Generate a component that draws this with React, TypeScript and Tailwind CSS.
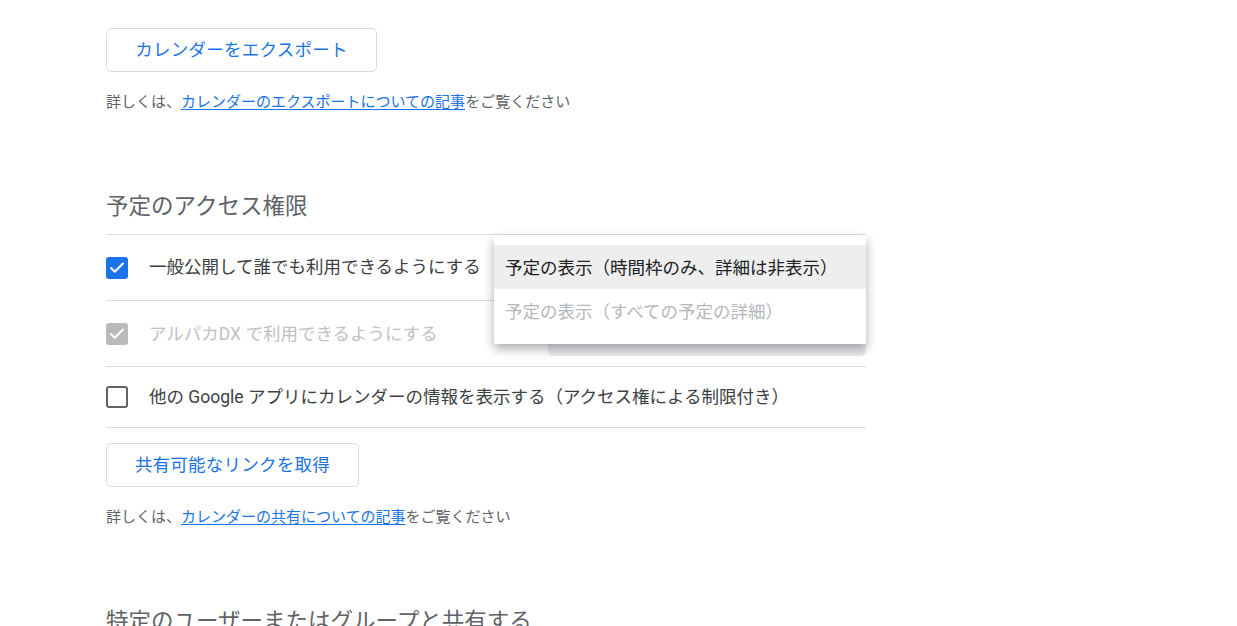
import { Check } from 'lucide-react'

const Box = ({ state }: { state: 'on' | 'off' | 'disabled' }) => {
  if (state === 'off') {
    return <span className="block w-[22px] h-[22px] rounded-[3px] border-[2.5px] border-[#5f6368] shrink-0" />
  }
  return (
    <span
      className={
        'flex items-center justify-center w-[22px] h-[22px] rounded-[3px] shrink-0 ' +
        (state === 'on' ? 'bg-[#1a73e8]' : 'bg-[#bababa]')
      }
    >
      <Check className="w-[18px] h-[18px] text-white" strokeWidth={2.75} />
    </span>
  )
}

export default function App() {
  return (
    <div className="h-[626px] overflow-hidden bg-white font-['Roboto','Noto_Sans_CJK_JP',sans-serif]">
      <div className="ml-[106px] w-[760px] pt-[28px]">
        <button className="h-[44px] w-[271px] rounded-[5px] border border-[#dadce0] bg-white text-[17.5px] tracking-[0.25px] text-[#1a73e8]">
          カレンダーをエクスポート
        </button>
        <p className="mt-[20px] text-[15px] leading-[20px] text-[#5f6368]">
          詳しくは、
          <a className="text-[#1a73e8] underline underline-offset-2">カレンダーのエクスポートについての記事</a>
          をご覧ください
        </p>

        <h2 className="mt-[79px] text-[22.5px] leading-[30px] text-[#5f6368]">予定のアクセス権限</h2>

        <div className="mt-[13px] border-t border-[#dadce0]">
          {/* row 1 */}
          <div className="relative flex h-[66px] items-center gap-[21px] border-b border-[#dadce0]">
            <Box state="on" />
            <span className="text-[17.5px] text-[#3c4043]">一般公開して誰でも利用できるようにする</span>
            <div className="absolute left-[388px] top-0 z-10 w-[372px] bg-white pt-[10px] pb-[11px] shadow-[0_5px_10px_rgba(0,0,0,0.32)]">
              <div className="flex h-[44px] items-center bg-[#eeeeee] px-[11px] pt-[2px] text-[17.5px] text-[#202124]">
                予定の表示（時間枠のみ、詳細は非表示）
              </div>
              <div className="flex h-[44px] items-center px-[11px] pt-[2px] text-[17.5px] text-[#b4b7bb]">
                予定の表示（すべての予定の詳細）
              </div>
            </div>
          </div>
          {/* row 2 */}
          <div className="flex h-[66px] items-center gap-[21px] border-b border-[#dadce0]">
            <Box state="disabled" />
            <span className="pt-[2px] text-[17.5px] text-[#bdc1c6]">アルパカDX で利用できるようにする</span>
            <div className="ml-auto h-[44px] w-[318px] rounded-[5px] bg-[#e8eaed]" />
          </div>
          {/* row 3 */}
          <div className="flex h-[61px] items-center gap-[21px] border-b border-[#dadce0]">
            <Box state="off" />
            <span className="text-[17.5px] text-[#3c4043]">
              他の Google アプリにカレンダーの情報を表示する（アクセス権による制限付き）
            </span>
          </div>
        </div>

        <button className="mt-[15px] h-[44px] w-[253px] rounded-[5px] border border-[#dadce0] bg-white text-[17.5px] tracking-[0.25px] text-[#1a73e8]">
          共有可能なリンクを取得
        </button>
        <p className="mt-[20px] text-[15px] leading-[20px] text-[#5f6368]">
          詳しくは、
          <a className="text-[#1a73e8] underline underline-offset-2">カレンダーの共有についての記事</a>
          をご覧ください
        </p>

        <h2 className="mt-[79px] text-[22.5px] leading-[30px] text-[#5f6368]">特定のユーザーまたはグループと共有する</h2>
      </div>
    </div>
  )
}
